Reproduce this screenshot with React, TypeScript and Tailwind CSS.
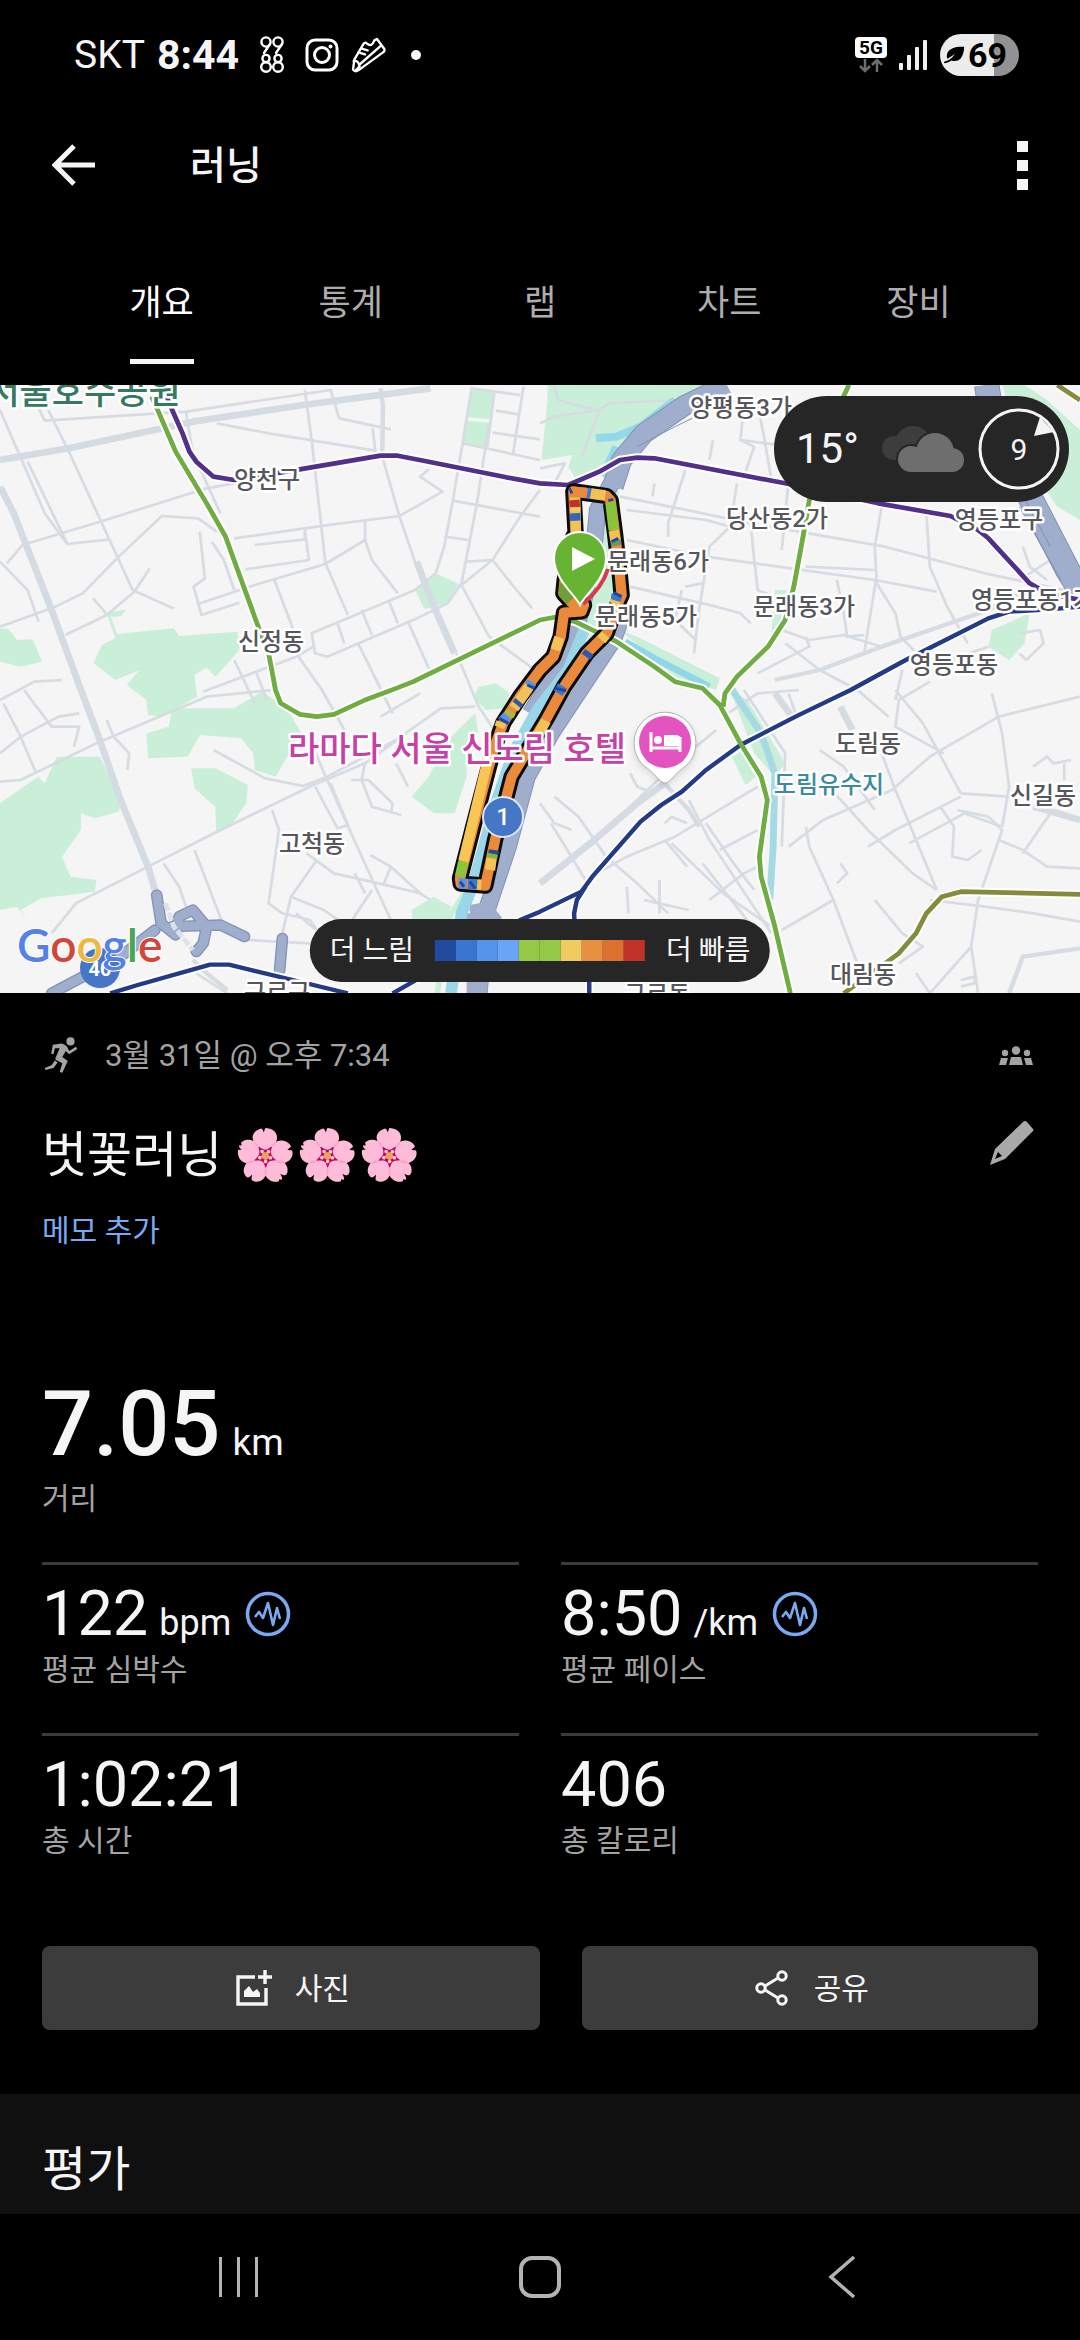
const tabs = ['개요', '통계', '랩', '차트', '장비'];

const paceColors = [
  'bg-[#1f4a9e]', 'bg-[#3876d2]', 'bg-[#5494ea]', 'bg-[#6aa4f7]', 'bg-[#93c947]',
  'bg-[#93c947]', 'bg-[#f0cc60]', 'bg-[#e98f40]', 'bg-[#dc7030]', 'bg-[#c1332a]',
];

const stats = [
  { value: '122', unit: 'bpm', label: '평균 심박수', chart: true },
  { value: '8:50', unit: '/km', label: '평균 페이스', chart: true },
  { value: '1:02:21', unit: '', label: '총 시간', chart: false },
  { value: '406', unit: '', label: '총 칼로리', chart: false },
];

const places = [
  { name: '양천구', x: 267, y: 103 },
  { name: '신정동', x: 271, y: 265 },
  { name: '양평동3가', x: 741, y: 31 },
  { name: '당산동2가', x: 777, y: 142 },
  { name: '영등포구', x: 999, y: 143 },
  { name: '문래동6가', x: 658, y: 185 },
  { name: '문래동5가', x: 646, y: 240 },
  { name: '문래동3가', x: 804, y: 230 },
  { name: '영등포동1가', x: 1033, y: 223 },
  { name: '영등포동', x: 954, y: 288 },
  { name: '도림동', x: 868, y: 367 },
  { name: '신길동', x: 1043, y: 419 },
  { name: '고척동', x: 312, y: 467 },
  { name: '대림동', x: 863, y: 598 },
  { name: '구로구', x: 277, y: 616 },
  { name: '구로동', x: 657, y: 618 },
];

const parks = [
  'M1370,25 L1435,35 L1425,118 L1357,112 Z',
  'M1355,122 L1420,128 L1410,205 L1345,190 Z',
  'M1205,628 L1270,582 L1332,612 L1300,670 L1232,688 Z',
  'M0,745 L25,748 L50,780 L95,778 L122,845 L60,860 L0,845 Z',
  'M310,700 L365,688 L352,708 L322,712 L340,762 L505,745 L520,768 L690,755 L695,810 L625,890 L600,862 L565,885 L572,950 L470,1010 L430,1005 L425,960 L368,915 L405,870 L335,900 L272,850 L295,795 L335,775 Z',
  'M1390,920 L1440,910 L1480,940 L1470,985 L1410,990 L1375,950 Z',
  'M425,1060 L490,1040 L500,985 L680,985 L760,935 L830,980 L875,1060 L800,1190 L740,1170 L735,1120 L700,1075 L580,1065 L545,1130 L430,1135 Z',
  'M555,1165 L625,1165 L720,1215 L715,1270 L675,1330 L628,1360 L625,1280 L565,1225 Z',
  'M0,1270 L110,1190 L130,1210 L165,1130 L290,1130 L350,1260 L345,1295 L275,1315 L235,1300 L235,1350 L180,1430 L205,1490 L280,1500 L275,1535 L120,1555 L60,1590 L85,1630 L50,1580 L0,1590 Z',
  'M1300,1080 L1380,1000 L1388,1055 L1355,1095 L1355,1190 L1320,1300 L1260,1300 L1195,1250 L1245,1190 Z',
  'M1195,1590 L1260,1550 L1310,1580 L1290,1640 L1200,1640 Z',
  'M1590,15 L2060,15 L1890,140 L1800,215 L1740,290 L1680,310 L1650,260 L1662,225 L1572,240 L1590,60 Z',
  'M2910,15 L2975,15 L3040,60 L3136,150 L3136,420 L3070,380 L2990,260 Z',
  'M2880,750 L2990,700 L2975,790 L2930,840 L2870,800 Z',
  'M2250,630 L2285,630 L2270,740 L2240,760 Z',
  'M1800,750 L1850,770 L2090,895 L2080,930 L1960,890 Z',
  'M1770,290 L1795,300 L1810,560 L1740,790 L1700,740 L1735,500 Z',
  'M2120,930 L2170,960 L2280,1150 L2250,1190 L2190,1120 Z',
  'M2125,1130 L2160,1110 L2195,1190 L2165,1215 Z',
];

const roads = [
  'M0,90 L130,400 L195,492 L320,478',
  'M80,245 L195,490',
  'M110,80 L130,122 L540,95 L960,30 L985,115 L1135,148',
  'M140,90 L200,215 L385,630 L505,686',
  'M0,740 L150,685 L240,640 L345,530 L470,408 L575,415 L630,455',
  'M20,550 L65,495 L290,425 L600,325 L680,310',
  'M540,95 L560,220 L640,400',
  'M630,130 L780,160 L1090,212 L1082,145',
  'M885,30 L905,180 L945,550 L1010,705',
  'M680,475 L940,437 L1160,408 L1285,335 L1220,290 L1245,268',
  'M740,495 L885,478 L885,450 L897,540 L712,568',
  'M580,455 L595,595 L562,620 L585,705 L695,668',
  'M575,672 L740,615 L945,552 L1060,480 L1060,420',
  'M615,485 L650,540 L680,630',
  'M1060,480 L1080,540 L1155,640',
  'M795,595 L850,745 L870,835 L935,930 L1000,1050',
  'M1370,20 L1340,210 L1315,360 L1290,500 L1265,580 L1205,630 L905,760 L915,820 L950,830 L1200,720 L1300,670 L1340,610 L1385,370 L1420,130',
  'M1435,40 L1415,200',
  'M1370,25 L1510,45',
  'M1345,190 L1568,240',
  'M1520,20 L1490,220',
  'M1440,92 L1505,103',
  'M1430,158 L1568,178',
  'M1315,362 L1568,410',
  'M1568,330 L1510,410 L1430,540 L1340,615 L1420,770',
  'M1290,470 L1360,480',
  'M1355,545 L1430,540 L1500,630 L1545,685',
  'M190,765 L310,705 L390,635 L435,565',
  'M270,655 L300,690 L310,705',
  'M0,545 L80,630 L112,725',
  'M1110,230 L1160,410 L1210,560 L1230,620',
  'M1130,665 L1155,730',
  'M1050,690 L1080,765',
  'M980,730 L1000,790',
  'M1185,725 L1245,865',
  'M1040,790 L1140,1000',
  'M1325,820 L1390,980 L1480,1120',
  'M1420,770 L1568,880',
  'M0,960 L100,905 L180,900',
  'M590,935 L680,900 L860,830 L910,800',
  'M680,840 L740,970',
  'M745,880 L775,960',
  'M0,1205 L60,1200 L290,1085 L600,950 L790,930',
  'M0,1120 L60,1070 L170,1010 L230,1000',
  'M10,970 L60,1070 L105,1180',
  'M70,930 L150,1040 L230,1040 L215,1100',
  'M310,1020 L330,1070 L375,1120 L370,1170',
  'M620,1110 L770,1195 L880,1218 L950,1190 L1150,1080 L1280,985 L1380,980',
  'M150,1660 L220,1570 L420,1465 L640,1350 L910,1215 L1060,1150 L1180,1060',
  'M900,1080 L950,1200 L1090,1520 L1135,1620',
  'M915,1220 L980,1345 L1010,1335 L960,1210',
  'M790,1290 L810,1350 L780,1570 L820,1600 L900,1620 L1000,1770',
  'M1060,1150 L1050,1200 L1080,1280 L1165,1305',
  'M1020,1200 L1070,1200 L1140,1270 L1135,1300',
  'M890,1420 L970,1480 L1100,1510 L1220,1540 L1250,1560',
  'M920,1440 L845,1550 L820,1660',
  'M845,1550 L940,1590 L1010,1640 L1080,1530',
  'M1075,1425 L1135,1460 L1220,1540',
  'M1135,1460 L1115,1510',
  'M565,1410 L650,1640',
  'M475,1450 L520,1520 L540,1580',
  'M1030,1480 L1060,1540',
  'M1105,1010 L1220,940',
  'M1150,1150 L1185,1220',
  'M570,1780 L660,1840',
  'M720,1680 L900,1690',
  'M860,1600 L930,1660',
  'M1568,130 L1610,110 L1740,90 L1770,70 L1960,60',
  'M1610,20 L1620,60 L1740,92 L1690,230',
  'M1568,265 L1640,250 L1610,310',
  'M2160,80 L2150,180 L2190,200 L2160,290',
  'M2200,70 L2220,180 L2240,300',
  'M2150,180 L2300,200',
  'M2070,180 L2060,240',
  'M1900,310 L1895,350',
  'M1990,270 L1940,430 L1940,470',
  'M1800,350 L1900,370 L2180,430 L2570,500 L2860,580 L3136,640',
  'M1820,390 L2050,420 L2120,440',
  'M2140,310 L2120,440 L2060,500 L2030,690 L2015,820',
  'M1820,480 L2050,530 L2540,600 L2720,635',
  'M2180,430 L2190,540 L2200,630 L2250,650',
  'M2290,300 L2270,510',
  'M2560,380 L2540,500 L2545,590 L2510,815',
  'M2690,400 L2700,560 L2750,680 L2810,790',
  'M2540,600 L2600,700 L2615,770 L2700,860',
  'M2340,560 L2540,570',
  'M1830,620 L2080,680 L2150,700 L2180,730',
  'M1980,630 L1960,720 L2020,780',
  'M1990,620 L2040,610',
  'M2430,600 L2450,700 L2460,770 L2510,765',
  'M2270,750 L2350,780 L2450,765 L2560,800',
  'M2280,790 L2380,870 L2490,930 L2580,1010',
  'M2200,880 L2350,800 L2340,770',
  'M2620,870 L2600,960',
  'M2700,860 L2870,800',
  'M2970,500 L2990,560 L3040,600',
  'M2960,600 L3080,520',
  'M2960,760 L3020,750 L3030,790 L2980,840 L2960,820',
  'M2700,905 L2610,960 L2600,1040 L2740,1120',
  'M1600,1330 L1700,1500 L1820,1430 L1960,1370 L2200,1220',
  'M1568,1270 L1610,1330 L1660,1350',
  'M1610,1250 L1680,1310 L1760,1430 L1850,1510 L1940,1600',
  'M1720,1390 L1950,1160 L2080,1050',
  'M1830,1180 L1850,1220 L1900,1240',
  'M2000,1260 L2060,1380 L2240,1660',
  'M1930,1330 L1950,1310 L1995,1330',
  'M1930,1380 L1995,1460',
  'M2040,1450 L2200,1660',
  'M2050,1330 L2130,1450 L2190,1530',
  'M2090,1410 L2200,1350',
  'M1950,1390 L2000,1440 L2100,1540 L2240,1640',
  'M1820,1520 L1825,1600',
  'M1915,1500 L1915,1600',
  'M1870,1560 L2000,1590',
  'M2060,1560 L2160,1480 L2200,1460',
  'M2340,1340 L2350,1400 L2420,1560 L2500,1780',
  'M2290,1400 L2390,1320 L2590,1230 L2700,1130 L2900,1010 L3136,950',
  'M2100,1010 L2200,940 L2320,930',
  'M2290,940 L2310,1000',
  'M2380,1190 L2520,1350 L2650,1480 L2720,1530',
  'M2380,1110 L2450,1160 L2540,1290',
  'M2560,1120 L2600,1230 L2720,1530',
  'M2640,1390 L2800,1300 L2910,1340',
  'M2600,930 L2680,1030 L2790,1240 L2930,1250',
  'M2520,1400 L2600,1350 L2790,1250',
  'M2730,1280 L2770,1340 L2765,1430 L2810,1440 L2850,1410',
  'M2780,1290 L2870,1310 L2910,1350 L2880,1440 L2840,1560 L2820,1700 L2840,1840',
  'M2880,940 L2910,1060 L2930,1220 L2910,1340',
  'M2700,1560 L2860,1580 L3000,1600 L3136,1625',
  'M2900,1380 L2970,1410 L3040,1460 L3136,1465',
  'M3050,1300 L2970,1420',
  'M3000,1160 L3040,1130 L3060,1150 L3110,1140 M3090,1150 L3090,1200',
  'M2540,1560 L2620,1660 L2680,1700 L2610,1750',
  'M2700,1840 L2820,1700',
  'M2270,1650 L2420,1560',
  'M2430,1510 L2460,1480 L2440,1450',
  'M2660,1780 L2700,1840',
  'M2790,1800 L2830,1790 L2830,1810 L2790,1820',
];

const majorRoads = [
  'M0,240 L200,205 L560,125 L880,75 L1250,25',
  'M0,320 L40,400 L150,690 L235,930 L290,1080 L350,1260 L430,1460 L450,1530',
  'M1210,545 L1260,680 L1320,820',
  'M1568,1510 L1720,1385 L1850,1270 L1930,1210',
  'M2250,940 L2300,1010',
  'M2440,980 L2475,1050',
  'M3000,1280 L3070,1300 L3136,1320',
];

const midRoads = [
  'M1105,25 L1112,75 L1110,230',
  'M1930,1210 L2000,1290 L2030,1340',
  'M2930,1840 L2970,1730 L3136,1705',
  'M2250,900 L2380,870 L2560,800 L2870,690 L3000,620',
  'M560,1740 L600,1780 L660,1830',
];

const routeParts = [
  { d: 'M405,66 L408,190', color: '#f3c257' },
  { d: 'M403,90 L405,112', color: '#c1332a' },
  { d: 'M406,112 L406,122', color: '#f0cc60' },
  { d: 'M405,130 L406,152', color: '#2f66c0' },
  { d: 'M390,66 L440,68', color: '#ea8a3a' },
  { d: 'M442,68 L452,70', color: '#3876d2' },
  { d: 'M453,70 L496,76', color: '#f3c257' },
  { d: 'M511,96 L521,180', color: '#8ac43a' },
  { d: 'M521,182 L526,210', color: '#f3c257' },
  { d: 'M526,212 L529,226', color: '#5d9b6a' },
  { d: 'M530,372 L528,392', color: '#3876d2' },
  { d: 'M526,392 L522,402', color: '#f3c257' },
  { d: 'M497,494 L484,510', color: '#f3c257' },
  { d: 'M448,546 L438,560', color: '#2a5aad' },
  { d: 'M368,648 L354,670', color: '#3876d2' },
  { d: 'M318,752 L275,830', color: '#f3c257' },
  { d: 'M162,1140 L160,1152', color: '#1f4a9e' },
  { d: 'M159,1152 L156,1164', color: '#7dbb3a' },
  { d: 'M155,1165 L150,1200', color: '#f3c257' },
  { d: 'M84,1242 L112,1243', color: '#3876d2' },
  { d: 'M112,1243 L124,1244', color: '#f3c257' },
  { d: 'M56,1240 L80,1241', color: '#5494ea' },
  { d: 'M60,1220 L70,1175', color: '#8ac43a' },
  { d: 'M70,1174 L148,850', color: '#f8c655' },
  { d: 'M358,502 L346,540', color: '#f3c257' },
  { d: 'M276,636 L268,648', color: '#5494ea' },
  { d: 'M268,650 L222,715', color: '#f3c257' },
  { d: 'M238,694 L230,704', color: '#2a5aad' },
  { d: 'M214,724 L206,738', color: '#a9b948' },
  { d: 'M202,738 L186,756', color: '#5494ea' },
  { d: 'M184,756 L178,772', color: '#f3c257' },
  { d: 'M374,340 L372,370 L392,392', color: '#6f9f38' },
];

const routeLine =
  'M400,200 L374,330 L370,370 L395,398 L432,405 L425,424 L372,428 L362,500 L340,560 L300,600 L240,680 L190,758 L160,840 L110,1030 L60,1225 L62,1241 L136,1247 L165,1110 L215,920 L320,745 L372,650 L440,550 L500,490 L525,420 L545,375 L540,320 L525,190 L512,92 L500,78 L400,64 L408,210';

const lines = [
  { color: '#52308a', width: 14, d: 'M485,50 L500,90 L530,160 L550,215 L570,245 L620,290 L680,300 L870,268 L1105,227 L1155,227 L1230,242 L1470,292 L1568,310 L1650,315 L1740,275 L1800,240 L1850,233 L1900,235 L2280,310 L2550,370 L2760,408 L2840,450 L2870,475 L2990,610 L3040,640 L3136,660' },
  { color: '#233a86', width: 13, d: 'M320,1840 L400,1815 L610,1754 L665,1754 L850,1800 L1010,1840 M1140,1840 L1200,1805 L1510,1620 L1568,1595 L1688,1535 L1720,1490 L1860,1325 L1920,1275 L1980,1235 L2050,1170 L2150,1095 L2310,1010 L2400,965 L2470,930 L2630,840 L2870,715 L2930,695 L3050,688 L3136,680 M1700,1520 L1675,1560 L1667,1600 L1668,1620 M1711,1780 V1840' },
  { color: '#6fac42', width: 14, d: 'M440,50 L460,95 L510,215 L600,370 L655,470 L690,570 L750,740 L780,820 L800,930 L815,970 L870,1003 L920,1010 L970,1003 L1060,960 L1150,925 L1200,905 L1568,720 L1610,712 L1670,725 L1790,785 L1900,860 L1960,905 L2040,925 L2090,975 L2150,1090 L2210,1190 L2228,1260 L2205,1430 L2210,1490 L2250,1640 L2295,1840 M2465,15 L2440,70 L2350,360 L2330,480 L2305,620 L2280,720 L2230,800 L2140,890 L2105,940 L2100,980' },
  { color: '#858b3c', width: 14, d: 'M2450,1840 L2610,1720 L2660,1660 L2690,1600 L2735,1550 L2790,1535 L3136,1543 M3070,15 L3136,60' },
];

function StatusBar() {
  return (
    <header className="flex h-[110px] items-center justify-between pl-[74px] pr-[61px]">
      <div className="flex items-center">
        <span className="text-[39px] leading-none">SKT</span>
        <span className="ml-3 text-[41px] font-bold leading-none">8:44</span>
        <svg className="ml-5 h-[38px] w-[26px]" viewBox="0 0 26 38" fill="none" stroke="white" strokeWidth="2.4" strokeLinecap="round">
          <circle cx="7" cy="6" r="4.6" />
          <circle cx="19" cy="6" r="4.6" />
          <path d="M11 8 L5 17 M23 8 L17 17" />
          <circle cx="7" cy="22.5" r="3.6" />
          <circle cx="19" cy="22.5" r="3.6" />
          <circle cx="7" cy="31" r="4.8" />
          <circle cx="19" cy="31" r="4.8" />
        </svg>
        <svg className="ml-5 h-[34px] w-[34px]" viewBox="0 0 34 34" fill="none" stroke="white" strokeWidth="3">
          <rect x="2" y="2" width="30" height="30" rx="8" />
          <circle cx="17" cy="17" r="7.5" />
          <circle cx="25.5" cy="8.5" r="2" fill="white" stroke="none" />
        </svg>
        <svg className="ml-3 h-[36px] w-[36px]" viewBox="330 52 108 108" fill="none" stroke="white" strokeWidth="7" strokeLinejoin="round" strokeLinecap="round">
          <path d="M336 150 L340 120 L368 72 Q372 66 378 72 Q392 84 400 62 L408 58 L430 88 Q432 96 426 98 L352 152 Q342 158 336 150 Z" />
          <path d="M338 124 Q352 122 354 136 L420 78 M356 140 L344 152 M352 98 L372 104 M360 86 L380 92" />
        </svg>
        <span className="ml-6 h-[10px] w-[10px] rounded-full bg-white" />
      </div>
      <div className="flex items-center">
        <svg className="h-[36px] w-[32px]" viewBox="0 0 32 36">
          <rect width="32" height="21" rx="4" fill="white" />
          <text x="16" y="17" textAnchor="middle" fontSize="19" fontWeight="700">5G</text>
          <path d="M10 22 V34 M5 29 L10 34 L15 29 M22 35 V23 M17 28 L22 23 L27 28" fill="none" stroke="#6d6d6d" strokeWidth="2.5" />
        </svg>
        <svg className="ml-3 h-[30px] w-[29px]" viewBox="0 0 29 30" fill="#f0f0f0">
          <rect x="0" y="23" width="4" height="7" rx="1" />
          <rect x="8" y="15" width="4" height="15" rx="1" />
          <rect x="16" y="7" width="4" height="23" rx="1" />
          <rect x="24" y="0" width="4" height="30" rx="1" />
        </svg>
        <div className="ml-3 flex h-[42px] w-[79px] items-center gap-[2px] rounded-full bg-linear-to-r from-[#ececec] from-68% to-[#929292] to-68% pl-1 text-black">
          <svg className="h-[20px] w-[22px]" viewBox="0 0 24 20">
            <path d="M22 1 Q8 0 4 7 Q2 12 4 14 L13 8 L8 16 Q14 18 18 14 Q22 9 22 1 Z" />
            <path d="M1 18 Q8 17 13 9" fill="none" stroke="black" strokeWidth="2" strokeLinecap="round" />
          </svg>
          <span className="text-[34px] font-bold leading-none">69</span>
        </div>
      </div>
    </header>
  );
}

function RouteMap() {
  return (
    <svg className="block h-auto w-full" viewBox="0 0 1080 608" role="img" aria-label="지도">
      <rect width="1080" height="608" fill="#f5f5f6" />
      <g transform="scale(0.34439 0.33333) translate(0 -15)" fill="none" strokeLinejoin="round">
        {parks.map((d) => <path key={d} d={d} fill="#c9efd8" />)}
        <g stroke="#d6dce2" strokeWidth="8">
          {roads.map((d) => <path key={d} d={d} />)}
        </g>
        <g stroke="#d6dce2" strokeWidth="13">
          {midRoads.map((d) => <path key={d} d={d} />)}
        </g>
        <g stroke="#d5dbe2" strokeWidth="20">
          {majorRoads.map((d) => <path key={d} d={d} />)}
        </g>

        {/* Stream and expressways beside it */}
        <path d="M1730,175 L1790,170 L1860,140 L1960,60 M1790,200 L1750,290 M1720,380 L1740,440" stroke="#94d9ea" strokeWidth="24" />
        <path d="M1745,690 L1700,820 L1600,960 L1490,1130 L1370,1500 L1300,1620 L1270,1840" stroke="#c9efd8" strokeWidth="16" />
        <path d="M1815,785 L1900,835 L2060,920" stroke="#8fd6e8" strokeWidth="20" />
        <path d="M2120,920 L2210,1060 L2250,1180 L2245,1400 L2235,1560" stroke="#a5d9e4" strokeWidth="20" />
        <path d="M2160,930 L2280,1120 L2270,1400" stroke="#d6dce2" strokeWidth="8" />
        <g stroke="#8493b6" strokeWidth="62">
          <path d="M2110,15 L1990,75 L1870,160 L1805,240 L1780,320" />
          <path d="M1780,300 L1735,390 L1725,500 L1700,640 L1670,760 L1600,900 L1540,1000" strokeWidth="50" />
          <path d="M1815,680 L1780,780 L1690,920 L1600,1060 L1530,1190 L1475,1400 L1410,1600 L1390,1840" strokeWidth="52" />
          <path d="M2865,15 L2885,150 L2990,350 L3100,570 L3136,630" strokeWidth="74" />
        </g>
        <g stroke="#a0aecd" strokeWidth="56">
          <path d="M2110,15 L1990,75 L1870,160 L1805,240 L1780,320" />
          <path d="M1780,300 L1735,390 L1725,500 L1700,640 L1670,760 L1600,900 L1540,1000" strokeWidth="44" />
          <path d="M1815,680 L1780,780 L1690,920 L1600,1060 L1530,1190 L1475,1400 L1410,1600 L1390,1840" strokeWidth="46" />
          <path d="M2865,15 L2885,150 L2990,350 L3100,570 L3136,630" strokeWidth="68" />
          <path d="M1390,1570 L1400,1620 L1440,1590 M1385,1600 V1840" strokeWidth="60" />
        </g>
        <path d="M1700,740 L1650,870 L1560,990 L1490,1120 L1440,1270 L1375,1510 L1340,1600 L1310,1840" stroke="#98d6e8" strokeWidth="34" />
        <path d="M2060,90 L1960,140 L1850,200 M2960,380 L3080,600 M2920,250 L3050,500" stroke="#8493b6" strokeWidth="3" />
        <g stroke="#8493b6" strokeWidth="34" strokeLinecap="round">
          <path d="M455,1545 L468,1630 L510,1665 L520,1610 L560,1590 L600,1640 L590,1690 L570,1715 M500,1640 L640,1635 L710,1670 M450,1650 L350,1730 L150,1840 M820,1675 L812,1770" />
        </g>
        <g stroke="#a0aecd" strokeWidth="26" strokeLinecap="round">
          <path d="M455,1545 L468,1630 L510,1665 L520,1610 L560,1590 L600,1640 L590,1690 L570,1715 M500,1640 L640,1635 L710,1670 M450,1650 L350,1730 L150,1840 M820,1675 L812,1770" />
        </g>
        <path d="M480,1570 L505,1640 L560,1710" stroke="#dde2e8" strokeWidth="14" strokeDasharray="24 6" />

        {lines.map((l) => <path key={l.color} d={l.d} stroke="#ffffff" strokeWidth={l.width + 12} />)}
        {lines.map((l) => <path key={l.color} d={l.d} stroke={l.color} strokeWidth={l.width} />)}
      </g>

      {/* Run route coloured by pace */}
      <g transform="translate(440 85) scale(0.33333)" fill="none" strokeLinejoin="round">
        <path d={routeLine} stroke="#0c0c0c" strokeWidth="49" strokeLinecap="round" />
        <path d={routeLine} stroke="#ea8a3a" strokeWidth="31" strokeLinecap="round" />
        {routeParts.map((p) => <path key={p.d} d={p.d} stroke={p.color} strokeWidth="31" />)}
        <path d="M388,55 L396,70 M505,92 L520,88 M515,215 L535,205 M262,645 L284,655 M345,655 L378,662 M178,745 L205,760 M520,368 L545,380 M60,1235 L72,1250 M90,1235 L105,1255" stroke="#1f4a9e" strokeWidth="9" />
      </g>

      <g fill="#56565c" stroke="#ffffff" strokeWidth="5" strokeLinejoin="round" fontSize="24" fontWeight="500" textAnchor="middle" style={{ paintOrder: 'stroke' }}>
        {places.map((p) => <text key={p.name} x={p.x} y={p.y}>{p.name}</text>)}
        <text x="829" y="408" fill="#3c8a9e">도림유수지</text>
        <text x="84" y="19" fill="#35795f" fontSize="35">서울호수공원</text>
        <text x="457" y="376" fill="#c83fa6" fontSize="34">라마다 서울 신도림 호텔</text>
      </g>

      {/* Hotel pin */}
      <path className="drop-shadow-md" d="M665 398 C660 398 655 388 643 380 A31 31 0 1 1 687 380 C675 388 670 398 665 398 Z" fill="#ffffff" stroke="#b0b0b0" strokeWidth="1" />
      <circle cx="665" cy="357" r="26" fill="#e354c0" />
      <path d="M651 347 V367 M651 363 H680 M680 367 V352" stroke="#ffffff" strokeWidth="3" fill="none" />
      <path d="M664 350 H676 Q681 350 681 356 V361 H664 Z" fill="#ffffff" />
      <circle cx="658" cy="355" r="4" fill="#ffffff" />

      {/* Distance marker */}
      <circle cx="503" cy="432" r="20" fill="#4676c6" stroke="#dce8fb" strokeWidth="2" />
      <text x="503" y="440" fill="#ffffff" fontSize="24" fontWeight="500" textAnchor="middle">1</text>

      {/* Start pin */}
      <path d="M583 219 Q602 203 608 184" stroke="#d93a4a" strokeWidth="4" fill="none" />
      <path d="M580 220 C576 211 554 194 554 173 A26 26 0 0 1 606 173 C606 194 584 211 580 220 Z" fill="#67b332" stroke="#ffffff" strokeWidth="2" />
      <path d="M572 162 L595 174 L572 186 Z" fill="#ffffff" />

      <circle cx="100" cy="583" r="20" fill="#4676c6" />
      <text x="100" y="591" fill="#ffffff" fontSize="20" fontWeight="700" textAnchor="middle">40</text>
      <text x="17" y="577" fontSize="46" fontWeight="600" fontFamily="Lato, sans-serif" stroke="#ffffff" strokeWidth="2" style={{ paintOrder: 'stroke' }}>
        <tspan fill="#5480e8">G</tspan>
        <tspan fill="#d0473a">o</tspan>
        <tspan fill="#efb83c">o</tspan>
        <tspan fill="#5480e8">g</tspan>
        <tspan fill="#4aa557">l</tspan>
        <tspan fill="#d0473a">e</tspan>
      </text>
    </svg>
  );
}

function WeatherPill() {
  return (
    <div className="absolute right-[11px] top-[11px] flex h-[106px] items-center gap-[14px] rounded-full bg-[#262626] pl-[22px] pr-[9px]">
      <span className="w-[72px] text-[42px] leading-none">15°</span>
      <svg className="h-[47px] w-[82px]" viewBox="0 0 82 47">
        <g fill="#3d3d3d">
          <circle cx="12" cy="22" r="12" />
          <circle cx="31" cy="18" r="18" />
          <rect x="12" y="18" width="24" height="16" />
        </g>
        <g fill="#262626">
          <circle cx="29" cy="33" r="15" />
          <circle cx="53" cy="26" r="21" />
        </g>
        <g fill="#6e6e6e">
          <circle cx="29" cy="33" r="13" />
          <circle cx="53" cy="26" r="19" />
          <circle cx="70" cy="34" r="12" />
          <rect x="29" y="30" width="41" height="16" />
        </g>
      </svg>
      <svg className="h-[82px] w-[82px]" viewBox="0 0 82 82">
        <circle cx="41" cy="41" r="39" fill="none" stroke="#f4f4f4" strokeWidth="3" />
        <path d="M62 9 L56 28 L76 24 Z" fill="#f4f4f4" />
        <text x="41" y="52" fill="#f4f4f4" fontSize="30" textAnchor="middle">9</text>
      </svg>
    </div>
  );
}

function PulseIcon() {
  return (
    <svg className="h-[46px] w-[46px]" viewBox="0 0 46 46" fill="none" stroke="#7aa9f2">
      <circle cx="23" cy="23" r="20.5" strokeWidth="3.5" />
      <path d="M10 26 L14 21 L18 27 L23 12 L28 34 L32 17 L35 28" strokeWidth="2.6" strokeLinejoin="round" />
    </svg>
  );
}

export default function App() {
  return (
    <div className="flex min-h-screen flex-col bg-black font-[Roboto,'Noto_Sans_CJK_KR',sans-serif] text-[#f5f5f5]">
      <StatusBar />

      {/* App bar */}
      <div className="flex h-[110px] items-center justify-between px-[52px]">
        <div className="flex items-center gap-[95px]">
          <button aria-label="뒤로">
            <svg className="block h-[42px] w-[43px]" viewBox="0 0 43 42" fill="none" stroke="#f5f5f5" strokeWidth="5">
              <path d="M43 21 H4 M22 2 L3 21 L22 40" />
            </svg>
          </button>
          <h1 className="pt-[2px] text-[39px] font-medium leading-none">러닝</h1>
        </div>
        <button aria-label="더보기" className="flex flex-col gap-2">
          <span className="h-[11px] w-[11px] bg-[#f5f5f5]" />
          <span className="h-[11px] w-[11px] bg-[#f5f5f5]" />
          <span className="h-[11px] w-[11px] bg-[#f5f5f5]" />
        </button>
      </div>

      <nav className="flex px-[67px] pt-14">
        {tabs.map((t, i) => (
          <button key={t} className="flex h-[109px] flex-1 flex-col items-center justify-between pb-[21px] pt-[10px]">
            <span className={i === 0 ? 'text-[35px] leading-[36px] text-white' : 'text-[35px] leading-[36px] text-[#adadad]'}>{t}</span>
            {i === 0 && <span className="h-[5px] w-16 bg-[#f5f5f5]" />}
          </button>
        ))}
      </nav>

      {/* Map */}
      <section className="relative overflow-hidden">
        <RouteMap />
        <WeatherPill />
        <div className="absolute bottom-[11px] left-1/2 flex h-[63px] -translate-x-1/2 items-center gap-[21px] whitespace-nowrap rounded-full bg-[#262626] px-5 text-[28px] leading-none">
          <span>더 느림</span>
          <div className="flex h-[21px]">
            {paceColors.map((c, i) => <span key={i} className={`w-[21px] ${c}`} />)}
          </div>
          <span>더 빠름</span>
        </div>
      </section>

      {/* Activity header */}
      <section className="px-[42px] pt-9">
        <div className="flex h-[52px] items-center text-[#a3a3a3]">
          <svg className="h-[38px] w-[38px]" viewBox="48 22 108 112" fill="currentColor">
            <circle cx="130" cy="38" r="12" />
            <path d="M78 48 L104 44 Q114 46 120 54 L126 66 L146 54 L150 60 L126 76 L116 66 L106 84 L122 96 L106 130 L98 128 L106 102 L86 92 Q84 88 88 82 L98 58 L84 58 L80 76 L73 74 Z" />
            <path d="M84 94 L92 100 L80 116 L56 122 L54 116 L74 108 Z" />
          </svg>
          <span className="ml-[25px] flex-1 text-[31px] leading-none">3월 31일 @ 오후 7:34</span>
          <svg className="mr-[5px] h-[19px] w-[34px]" viewBox="0 0 34 19" fill="currentColor">
            <circle cx="17" cy="4.5" r="4.2" />
            <circle cx="6" cy="7" r="3.2" />
            <circle cx="28" cy="7" r="3.2" />
            <path d="M10 19 L12 11 H22 L24 19 Z M0 19 L2 12 H9 L7 19 Z M34 19 L32 12 H25 L27 19 Z" />
          </svg>
        </div>
        <div className="mt-10 flex h-[68px] items-center justify-between">
          <h2 className="text-[49px] leading-none">벗꽃러닝 <span className="text-[50px]">🌸🌸🌸</span></h2>
          <button aria-label="수정" className="mr-1 self-start">
            <svg className="block h-[44px] w-[44px]" viewBox="0 0 44 44" fill="#a9a9a9">
              <path fillRule="evenodd" d="M33 1 Q35 -1 37 1 L43 8 Q44 9 43 10 L15 38 L0 44 L5 28 Z M8 31 L5 38 L12 35 Z" />
            </svg>
          </button>
        </div>
        <button className="mt-5 block text-[30px] leading-[44px] text-[#7aa9f2]">메모 추가</button>
      </section>

      {/* Stats */}
      <section className="px-[42px] pt-32">
        <p className="flex h-[88px] items-baseline gap-3 leading-[88px]">
          <span className="text-[90px] font-medium">7.05</span>
          <span className="text-[37px]">km</span>
        </p>
        <p className="mt-[10px] text-[30px] leading-[40px] text-[#a3a3a3]">거리</p>
        <div className="mt-[43px] grid grid-cols-2 gap-x-[42px]">
          {stats.map((s) => (
            <div key={s.label} className="h-[171px] border-t-[3px] border-[#3b3b3b] pt-[17px]">
              <div className="flex h-[64px] items-center gap-[14px]">
                <p className="flex h-[64px] items-baseline gap-[11px] leading-[64px]">
                  <span className="text-[63px]">{s.value}</span>
                  {s.unit && <span className="text-[36px]">{s.unit}</span>}
                </p>
                {s.chart && <PulseIcon />}
              </div>
              <p className="mt-1 text-[30px] leading-[40px] text-[#a3a3a3]">{s.label}</p>
            </div>
          ))}
        </div>
      </section>

      <div className="mt-[42px] flex gap-[42px] px-[42px]">
        <button className="flex h-[84px] flex-[12] items-center justify-center gap-[22px] rounded-lg bg-[#3c3c3c] pl-1 text-[30px]">
          <svg className="h-[36px] w-[37px]" viewBox="0 0 37 36" fill="none" stroke="#f5f5f5" strokeWidth="3.4">
            <path d="M19 7 H2 V34 H30 V18 M29 0 V14 M22 7 H36" />
            <path d="M8 27 V21 L13 16 L17 22 L21 19 L24 23 V27 Z" fill="#f5f5f5" stroke="none" />
          </svg>
          사진
        </button>
        <button className="flex h-[84px] flex-[11] items-center justify-center gap-[25px] rounded-lg bg-[#3c3c3c] pl-1 text-[30px]">
          <svg className="h-[36px] w-[34px]" viewBox="0 0 34 36" fill="none" stroke="#f5f5f5" strokeWidth="3">
            <circle cx="27" cy="6" r="4.2" />
            <circle cx="6" cy="18" r="4.2" />
            <circle cx="27" cy="30" r="4.2" />
            <path d="M10 16 L23 8 M10 20 L23 28" />
          </svg>
          공유
        </button>
      </div>

      <section className="mt-16 flex-1 bg-[#101010] px-[42px] pt-11">
        <h2 className="text-[48px] leading-[64px]">평가</h2>
      </section>

      {/* Navigation bar */}
      <footer className="flex h-[126px] items-center bg-black px-[87px]">
        <button aria-label="최근 앱" className="flex flex-1 justify-center gap-[15px]">
          <span className="h-[40px] w-[3px] bg-[#b3b3b3]" />
          <span className="h-[40px] w-[3px] bg-[#b3b3b3]" />
          <span className="h-[40px] w-[3px] bg-[#b3b3b3]" />
        </button>
        <button aria-label="홈" className="flex flex-1 justify-center">
          <span className="h-[42px] w-[42px] rounded-[13px] border-4 border-[#b3b3b3]" />
        </button>
        <button aria-label="뒤로 가기" className="flex flex-1 justify-center">
          <svg className="h-[44px] w-[28px]" viewBox="0 0 28 44" fill="none" stroke="#b3b3b3" strokeWidth="3.5">
            <path d="M26 2 L3 22 L26 42" />
          </svg>
        </button>
      </footer>
    </div>
  );
}
